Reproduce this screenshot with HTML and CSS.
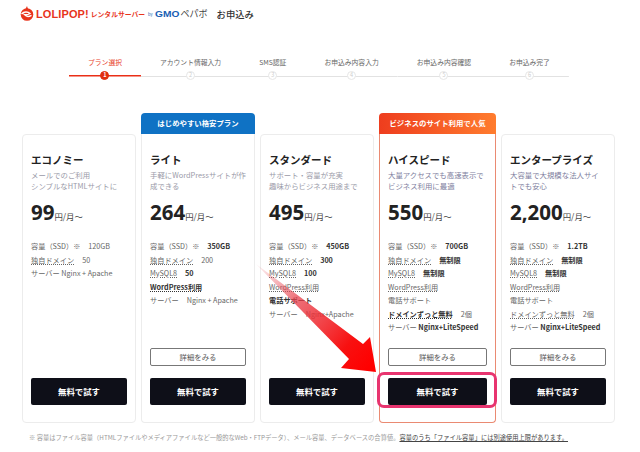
FILE: index.html
```html
<!DOCTYPE html>
<html lang="ja">
<head>
  <meta charset="UTF-8" />
  <title>お申込み</title>
  <link rel="stylesheet" href="styles.css">
</head>
<body>
  <div class="page">
    <header class="header">
      <svg class="logo-icon" viewBox="0 0 14 15">
        <path d="M7 0 L8 3 L5 4 Z" fill="#e8341c"/>
        <circle cx="7" cy="8.5" r="6.3" fill="#e8341c"/>
        <path d="M1.5 8 C4 5.5 8 5.5 10 7.5 C8.5 8.5 6 9 4.5 8.6 C6 10.5 9 10.8 11.5 9.4" fill="none" stroke="#fff" stroke-width="1.4"/>
      </svg>
      <span class="logo-name">LOLIPOP!</span>
      <span class="logo-sub">レンタルサーバー</span>
      <span class="logo-by">by</span>
      <span class="logo-gmo">GMO</span>
      <span class="logo-pepabo">ペパボ</span>
      <span class="header-title">お申込み</span>
    </header>

    <ol class="steps">
      <li class="step current"><span class="step-label">プラン選択</span><span class="step-track"><span class="step-dot">1</span></span></li>
      <li class="step"><span class="step-label">アカウント情報入力</span><span class="step-track"><span class="step-dot">2</span></span></li>
      <li class="step"><span class="step-label">SMS認証</span><span class="step-track"><span class="step-dot">3</span></span></li>
      <li class="step"><span class="step-label">お申込み内容入力</span><span class="step-track"><span class="step-dot">4</span></span></li>
      <li class="step"><span class="step-label">お申込み内容確認</span><span class="step-track"><span class="step-dot">5</span></span></li>
      <li class="step"><span class="step-label">お申込み完了</span><span class="step-track"><span class="step-dot">6</span></span></li>
    </ol>

    <div class="plans">
      <section class="plan">
        <div class="card">
          <h2 class="plan-name">エコノミー</h2>
          <p class="plan-desc">メールでのご利用<br>シンプルなHTMLサイトに</p>
          <p class="price"><b>99</b>円/月〜</p>
          <ul class="specs">
            <li>容量（SSD）※<span class="val">120GB</span></li>
            <li><u>独自ドメイン</u><span class="val">50</span></li>
            <li>サーバー Nginx + Apache</li>
          </ul>
          <div class="actions">
            <a class="btn-buy">無料で試す</a>
          </div>
        </div>
      </section>

      <section class="plan">
        <div class="tag tag-blue">はじめやすい格安プラン</div>
        <div class="card card-tagged">
          <h2 class="plan-name">ライト</h2>
          <p class="plan-desc">手軽にWordPressサイトが作成できる</p>
          <p class="price"><b>264</b>円/月〜</p>
          <ul class="specs">
            <li>容量（SSD）※<span class="val strong">350GB</span></li>
            <li><u>独自ドメイン</u><span class="val">200</span></li>
            <li><u>MySQL8</u><span class="val strong">50</span></li>
            <li class="strong"><u>WordPress利用</u></li>
            <li>サーバー<span class="val">Nginx + Apache</span></li>
          </ul>
          <div class="actions">
            <a class="btn-detail">詳細をみる</a>
            <a class="btn-buy">無料で試す</a>
          </div>
        </div>
      </section>

      <section class="plan">
        <div class="card">
          <h2 class="plan-name">スタンダード</h2>
          <p class="plan-desc">サポート・容量が充実<br>趣味からビジネス用途まで</p>
          <p class="price"><b>495</b>円/月〜</p>
          <ul class="specs">
            <li>容量（SSD）※<span class="val strong">450GB</span></li>
            <li><u>独自ドメイン</u><span class="val strong">300</span></li>
            <li><u>MySQL8</u><span class="val strong">100</span></li>
            <li><u>WordPress利用</u></li>
            <li class="strong">電話サポート</li>
            <li>サーバー<span class="val">Nginx+Apache</span></li>
          </ul>
          <div class="actions">
            <a class="btn-buy">無料で試す</a>
          </div>
        </div>
      </section>

      <section class="plan plan-wide">
        <div class="tag tag-orange">ビジネスのサイト利用で人気</div>
        <div class="card card-tagged card-orange">
          <h2 class="plan-name">ハイスピード</h2>
          <p class="plan-desc desc-blue">大量アクセスでも高速表示で<br>ビジネス利用に最適</p>
          <p class="price"><b>550</b>円/月〜</p>
          <ul class="specs">
            <li>容量（SSD）※<span class="val strong">700GB</span></li>
            <li><u>独自ドメイン</u><span class="val strong">無制限</span></li>
            <li><u>MySQL8</u><span class="val strong">無制限</span></li>
            <li><u>WordPress利用</u></li>
            <li>電話サポート</li>
            <li><u class="strong">ドメインずっと無料</u><span class="val">2個</span></li>
            <li>サーバー <span class="strong">Nginx+LiteSpeed</span></li>
          </ul>
          <div class="actions">
            <a class="btn-detail">詳細をみる</a>
            <a class="btn-buy btn-marked">無料で試す</a>
          </div>
        </div>
      </section>

      <section class="plan">
        <div class="card">
          <h2 class="plan-name">エンタープライズ</h2>
          <p class="plan-desc desc-blue">大容量で大規模な法人サイトでも安心</p>
          <p class="price"><b>2,200</b>円/月〜</p>
          <ul class="specs">
            <li>容量（SSD）※<span class="val strong">1.2TB</span></li>
            <li><u>独自ドメイン</u><span class="val strong">無制限</span></li>
            <li><u>MySQL8</u><span class="val strong">無制限</span></li>
            <li><u>WordPress利用</u></li>
            <li>電話サポート</li>
            <li><u>ドメインずっと無料</u><span class="val">2個</span></li>
            <li>サーバー <span class="strong">Nginx+LiteSpeed</span></li>
          </ul>
          <div class="actions">
            <a class="btn-detail">詳細をみる</a>
            <a class="btn-buy">無料で試す</a>
          </div>
        </div>
      </section>
    </div>

    <p class="note">※ 容量はファイル容量（HTMLファイルやメディアファイルなど一般的なWeb・FTPデータ）、メール容量、データベースの合算値。<u>容量のうち「ファイル容量」には別途使用上限があります。</u></p>

    <!-- annotation arrow drawn over the cards -->
    <svg class="arrow" viewBox="250 258 130 118">
      <defs>
        <linearGradient id="arrowFill" gradientUnits="userSpaceOnUse" x1="256" y1="264" x2="370" y2="366">
          <stop offset="0" stop-color="#e8505a" stop-opacity="0.05"/>
          <stop offset="0.35" stop-color="#e8404c" stop-opacity="0.75"/>
          <stop offset="0.8" stop-color="#f81010"/>
          <stop offset="1" stop-color="#ff0000"/>
        </linearGradient>
      </defs>
      <path d="M256 264 L363 344 L370 337 L376 372 L341 368 L349 359 Z" fill="url(#arrowFill)"/>
    </svg>
  </div>
</body>
</html>
```

FILE: styles.css
```css
* {
  box-sizing: border-box;
}

body {
  margin: 0;
  background: #fff;
  color: #333;
  font-family: "Noto Sans CJK JP", "Noto Sans", sans-serif;
}

.page {
  position: relative;
  width: 640px;
  height: 452px;
  overflow: hidden;
  padding: 0 25px 0 22px;
}

/* header */
.header {
  display: flex;
  align-items: center;
  height: 27px;
  margin-left: -2px;
  white-space: nowrap;
}

.logo-icon {
  width: 14px;
  height: 15px;
  margin-right: 2px;
}

.logo-name {
  font-family: "Liberation Sans", sans-serif;
  font-size: 11px;
  font-weight: 700;
  color: #e8341c;
  letter-spacing: 0.1px;
}

.logo-sub {
  margin-left: 2px;
  font-size: 6.8px;
  font-weight: 700;
  color: #e8341c;
}

.logo-by {
  margin-left: 3px;
  font-size: 4px;
  color: #1a5fb4;
}

.logo-gmo {
  margin-left: 2px;
  font-family: "Liberation Sans", sans-serif;
  font-size: 8.5px;
  font-weight: 700;
  color: #1a5fb4;
  transform: scaleX(1.2);
  transform-origin: left;
  width: 26px;
}

.logo-pepabo {
  font-size: 9px;
  color: #444;
  width: 28px;
}

.header-title {
  margin-left: 8px;
  font-size: 9.3px;
  font-weight: 500;
  color: #333;
}

/* steps */
.steps {
  display: flex;
  margin: 29px 0 0 47px;
  padding: 0;
  list-style: none;
}

.step {
  display: flex;
  flex-direction: column;
  align-items: stretch;
  text-align: center;
}

.step-label {
  padding: 0 19px;
  height: 13px;
  font-size: 6.8px;
  line-height: 13px;
  color: #666;
  white-space: nowrap;
}

.step-track {
  display: flex;
  justify-content: center;
  height: 10px;
  margin-top: 2px;
  background: linear-gradient(#e2e2e2, #e2e2e2) center / 100% 1px no-repeat;
}

.step-dot {
  width: 9px;
  height: 9px;
  border: 1px solid #e6e6e6;
  border-radius: 50%;
  background: #fff;
  color: #ccc;
  font-size: 5.5px;
  line-height: 7px;
}

.step.current .step-label {
  color: #e8442c;
}

.step.current .step-track {
  background: linear-gradient(#ea2f17, #ea2f17) center / 100% 1.5px no-repeat;
}

.step.current .step-dot {
  border-color: #e0300f;
  background: #e0300f;
  color: #fff;
  font-weight: 700;
}

/* plans */
.plans {
  display: flex;
  gap: 5px;
  height: 310px;
  margin-top: 32px;
}

.plan {
  display: flex;
  flex: 1;
  flex-direction: column;
  padding-top: 21px;
  min-width: 0;
}

.plan:has(.tag) {
  padding-top: 0;
}

.plan-wide {
  flex: 0 0 117px;
}

.tag {
  height: 21px;
  border-radius: 4px 4px 0 0;
  color: #fff;
  font-size: 7.4px;
  font-weight: 700;
  line-height: 20px;
  text-align: center;
  white-space: nowrap;
}

.tag-blue {
  background: #0f72c4;
}

.tag-orange {
  background: linear-gradient(90deg, #ee3d1e, #ff7c2e);
}

.card {
  display: flex;
  flex: 1;
  flex-direction: column;
  padding: 18px 8px 17px;
  border: 1px solid #ececec;
  border-radius: 4px;
  background: #fff;
}

.card-tagged {
  border-top: 0;
  border-radius: 0 0 4px 4px;
  padding-top: 19px;
}

.card-orange {
  border-color: #ea8a72;
}

.plan-name {
  margin: 0;
  font-size: 10.5px;
  font-weight: 700;
  line-height: 14px;
  color: #222;
  white-space: nowrap;
}

.plan-desc {
  height: 21px;
  margin: 3px 0 0;
  font-size: 7.4px;
  line-height: 10.5px;
  color: #9a9aa8;
}

.desc-blue {
  color: #80809e;
}

.price {
  display: flex;
  align-items: baseline;
  margin: 6px 0 0;
  height: 30px;
  font-size: 8.4px;
  line-height: 30px;
  color: #444;
}

.price b {
  font-family: "Noto Sans", sans-serif;
  font-size: 20.5px;
  font-weight: 700;
  color: #222;
}

.specs {
  margin: 13px 0 0;
  padding: 0;
  list-style: none;
  font-size: 7.2px;
  line-height: 13.5px;
  color: #666;
  white-space: nowrap;
}

.specs u {
  text-decoration: underline dotted;
}

.val {
  margin-left: 8px;
}

.strong {
  font-weight: 700;
  color: #333;
}

.actions {
  display: flex;
  flex-direction: column;
  gap: 12px;
  margin-top: auto;
}

.btn-detail,
.btn-buy {
  display: block;
  position: relative;
  text-align: center;
}

.btn-detail {
  height: 18px;
  border: 1px solid #777;
  border-radius: 2px;
  font-size: 7.4px;
  line-height: 16px;
  color: #555;
}

.btn-buy {
  height: 27px;
  border-radius: 2px;
  background: #0e0f18;
  color: #fff;
  font-size: 8.4px;
  font-weight: 700;
  line-height: 27px;
}

/* pink marker round the button */
.btn-marked::after {
  content: "";
  position: absolute;
  inset: -6px -10px -3px -11px;
  border: 3.5px solid #e8346f;
  border-radius: 7px;
}

.note {
  margin: 9px 0 0 7px;
  font-size: 6.27px;
  line-height: 12px;
  color: #999;
  white-space: nowrap;
}

.note u {
  color: #444;
}

.arrow {
  position: absolute;
  left: 250px;
  top: 258px;
  width: 130px;
  height: 118px;
}
```
